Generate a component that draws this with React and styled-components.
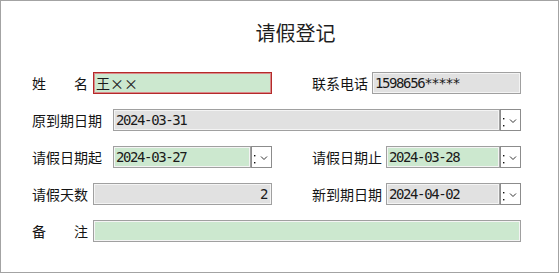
import React from "react";
import styled, { createGlobalStyle } from "styled-components";

const GlobalStyle = createGlobalStyle`
  html, body {
    margin: 0;
    padding: 0;
    background: #ffffff;
  }
`;

// WINDOW FRAME
const Frame = styled.div`
  box-sizing: border-box;
  width: 559px;
  height: 273px;
  border: 1px solid #a3a3a3;
  background: #ffffff;
  padding: 0 37px 0 31px;
  display: flex;
  flex-direction: column;
  font-family: "Noto Sans CJK SC", "Noto Sans", sans-serif;
  color: #141414;
`;

// TITLE
const Title = styled.h1`
  margin: 0;
  height: 71px;
  padding: 18px 0 0 38px;
  box-sizing: border-box;
  text-align: center;
  font-size: 20px;
  font-weight: 400;
  line-height: 28px;
  color: #1e1e1e;
`;

const Form = styled.div`
  display: flex;
  flex-direction: column;
  gap: 15px;
`;

const Row = styled.div`
  display: flex;
  align-items: center;
  height: 22px;
`;

const Group = styled.div`
  display: flex;
  align-items: center;
  width: ${(p) => (p.$right ? "209px" : "240px")};
  margin-left: ${(p) => (p.$right ? "auto" : "0")};
  flex: none;
`;

const Label = styled.div`
  width: ${(p) => p.$width}px;
  margin-right: ${(p) => p.$gap}px;
  flex: none;
  display: flex;
  justify-content: space-between;
  font-size: 14px;
  line-height: 22px;
  white-space: nowrap;
`;

const fills = {
  green: "#cce8cf",
  gray: "#e1e1e1",
};

// TEXT FIELD
const Field = styled.div`
  box-sizing: border-box;
  height: 22px;
  width: ${(p) => (p.$width ? `${p.$width}px` : "auto")};
  flex: ${(p) => (p.$width ? "none" : "1")};
  background: ${(p) => fills[p.$fill]};
  border: 1px solid ${(p) => (p.$active ? "#b52a2a" : "#a0a0a0")};
  box-shadow: inset 0 0 0 1px ${(p) => (p.$active ? "#d98a8a" : "#f4f4f4")};
  padding: 0 4px 0 2px;
  display: flex;
  align-items: center;
  justify-content: ${(p) => (p.$alignRight ? "flex-end" : "flex-start")};
  font-family: ${(p) =>
    p.$cjk
      ? `"Noto Sans CJK SC", "Noto Sans", sans-serif`
      : `"DejaVu Sans Mono", "Liberation Mono", monospace`};
  font-size: 14px;
  letter-spacing: ${(p) => (p.$cjk ? "0" : "-1.4px")};
  color: #1a1a1a;
  white-space: nowrap;
  overflow: hidden;
`;

// DATE PICKER BUTTON
const DropButton = styled.div`
  box-sizing: border-box;
  width: 21px;
  height: 22px;
  flex: none;
  border: 1px solid #8c8c8c;
  background: #ffffff;
  display: flex;
  align-items: center;
  justify-content: center;
`;

const Drop = () => (
  <DropButton>
    <svg width="19" height="20" viewBox="0 0 19 20">
      <rect x="2" y="8" width="1.4" height="1.4" fill="#111" />
      <rect x="2" y="15" width="1.4" height="1.4" fill="#111" />
      <path d="M9 9.5 L12 12.5 L15 9.5" fill="none" stroke="#333" strokeWidth="1" />
    </svg>
  </DropButton>
);

const Spaced = ({ a, b }) => (
  <>
    <span>{a}</span>
    <span>{b}</span>
  </>
);

export default function App() {
  return (
    <>
      <GlobalStyle />
      <Frame>
        <Title>请假登记</Title>
        <Form>
          <Row>
            <Group>
              <Label $width={56} $gap={5}>
                <Spaced a="姓" b="名" />
              </Label>
              <Field $width={179} $fill="green" $active $cjk>
                王××
              </Field>
            </Group>
            <Group $right>
              <Label $width={56} $gap={4}>联系电话</Label>
              <Field $width={149} $fill="gray">1598656*****</Field>
            </Group>
          </Row>

          <Row>
            <Label $width={70} $gap={11}>原到期日期</Label>
            <Field $fill="gray">2024-03-31</Field>
            <Drop />
          </Row>

          <Row>
            <Group>
              <Label $width={70} $gap={11}>请假日期起</Label>
              <Field $width={138} $fill="green">2024-03-27</Field>
              <Drop />
            </Group>
            <Group $right>
              <Label $width={70} $gap={4}>请假日期止</Label>
              <Field $width={114} $fill="green">2024-03-28</Field>
              <Drop />
            </Group>
          </Row>

          <Row>
            <Group>
              <Label $width={56} $gap={5}>请假天数</Label>
              <Field $width={179} $fill="gray" $alignRight>2</Field>
            </Group>
            <Group $right>
              <Label $width={70} $gap={4}>新到期日期</Label>
              <Field $width={114} $fill="gray">2024-04-02</Field>
              <Drop />
            </Group>
          </Row>

          <Row>
            <Label $width={56} $gap={5}>
              <Spaced a="备" b="注" />
            </Label>
            <Field $fill="green" />
          </Row>
        </Form>
      </Frame>
    </>
  );
}
